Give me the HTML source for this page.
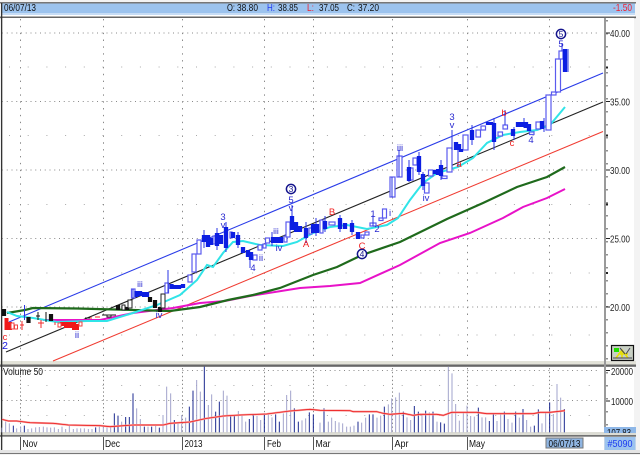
<!DOCTYPE html>
<html><head><meta charset="utf-8"><style>
html,body{margin:0;padding:0;background:#f4f4f4}
body{width:640px;height:455px;overflow:hidden}
svg{display:block}
#m{filter:blur(.3px)}
text{font-family:"Liberation Sans",sans-serif;font-size:10px;fill:#111}
.w{font-size:9.5px;fill:#2a2ad0;text-anchor:middle}
.r{font-size:9.5px;fill:#f02020;text-anchor:middle}
.a{font-size:10.5px;fill:#222}
</style></head><body>
<svg id="m" width="640" height="455" viewBox="0 0 640 455" xmlns="http://www.w3.org/2000/svg">
<rect width="640" height="455" fill="#f3f3f3"/>
<rect x="0" y="2" width="636" height="1.5" fill="#777"/>
<rect x="2" y="3.5" width="633" height="9.5" fill="#9cc3ee"/>
<rect x="2" y="13" width="633" height="2" fill="#c6dcf5"/>
<rect x="2" y="15" width="633" height="1.5" fill="#fff"/>
<rect x="0" y="16.5" width="636" height="1.7" fill="#666"/>
<rect x="2" y="18" width="602" height="343" fill="#fff"/>
<rect x="606" y="18" width="28" height="343" fill="#fff"/>
<rect x="2" y="367" width="602" height="65" fill="#fff"/>
<rect x="606" y="367" width="28" height="65" fill="#fff"/>
<rect x="0" y="361" width="636" height="3.5" fill="#e2e2d8"/>
<rect x="0" y="364.5" width="636" height="2.3" fill="#666"/>
<rect x="604" y="18" width="2" height="414" fill="#9a9a9a"/>
<rect x="0" y="432" width="636" height="3.2" fill="#dcdcd4"/>
<rect x="0" y="435.2" width="636" height="1.5" fill="#555"/>
<rect x="2" y="436.7" width="602" height="13.3" fill="#fff"/>
<rect x="604" y="436.7" width="32" height="13.3" fill="#e6e6e6"/>
<rect x="0" y="450" width="640" height="3" fill="#e4e4e4"/>
<rect x="0" y="453" width="640" height="1" fill="#777"/>
<rect x="1" y="3" width="1.3" height="447" fill="#333"/>

<!-- grid -->
<g stroke="#8a8a8a" stroke-width="1" fill="none">
<path stroke-dasharray="1 3.75" d="M2 33H600M2 101.5H600M2 170H600M2 238.5H600M2 307H600"/>
<path stroke-dasharray="1 17.7" stroke="#aaa" d="M9 67H600M9 135.5H600M9 204.5H600M9 273H600M9 335H600"/>
<path stroke-dasharray="1.4 5.45" d="M20.5 19V361M103.5 19V361M182.5 19V361M264.5 19V361M313.5 19V361M392.5 19V361M467.5 19V361M549.5 19V361"/>
<path stroke-dasharray="1 3.75" d="M2 370.5H600M2 400.5H600"/>
<path stroke-dasharray="1 17.7" stroke="#aaa" d="M9 385.5H600M9 415.5H600"/>
<path stroke-dasharray="1.4 2.5" d="M20.5 368V432M103.5 368V432M182.5 368V432M264.5 368V432M313.5 368V432M392.5 368V432M467.5 368V432M549.5 368V432"/>
</g>

<!-- channel + moving averages -->
<g fill="none">
<path d="M9 322L603 73" stroke="#2a3ce8" stroke-width="1.1"/>
<path d="M6 352L603 102" stroke="#222" stroke-width="1.1"/>
<path d="M53 361L603 131.5" stroke="#f03c32" stroke-width="1.1"/>
<path d="M43 320L67 320L100 320L133 313L173 308L200 303L225 301L250 296L300 288L330 286L360 283L400 265L440 243L470 233L503 218L523 207L547 198L565 189" stroke="#e812c8" stroke-width="2"/>
<path d="M7 313L25 310L33 308L77 308.5L133 310L170 311L200 307L228 300L253 295L280 288L313 275L337 267L362 255L400 242L447 219L483 203L517 187L547 177L565 167" stroke="#1f6a1c" stroke-width="2.2"/>
<path d="M7 312L17 316L33 318L57 322L87 321L107 321L133 313L157 305L180 295L197 280L207 265L213 267L223 253L233 242L243 241L260 245L283 246L297 242L313 233L330 227L347 225L367 229L387 225L398 218L410 200L423 183L437 173L458 167L473 158L487 143L503 135L520 132L537 130L550 125L565 107" stroke="#30e4e8" stroke-width="2"/>
</g>

<!-- early red/black candles -->
<path d="M6.5 318V330M10 322V330M62 322V326M66 322V328M70 322V328M74 322V330M77 324V330" stroke="#f01818" stroke-width="4" fill="none"/>
<g fill="#fff" stroke="#f04040" stroke-width="1"><rect x="11" y="323" width="3" height="6"/><rect x="14.500" y="325" width="3" height="4"/><rect x="58" y="323" width="3" height="4"/><rect x="79" y="322" width="3" height="4"/></g>
<path d="M20 325H24M22 321V330M38 323H44M41 320V328M87 318H92M95 317H100M55 322V325" stroke="#f02a2a" stroke-width="1" fill="none"/>
<path d="M28.500 317V323M51 314V321M118 305V310M127 307V310M150 297V302M155 300V308M160 307V312M4 309V316" stroke="#111" stroke-width="4.200" fill="none"/>
<path d="M36 316H40M38 312V320M85 318H90M102 315H116M46 322V312" stroke="#111" stroke-width="1" fill="none"/>
<path d="M24.500 305V320" stroke="#3038e0" stroke-width="1" fill="none"/>
<g fill="#fff" stroke="#222" stroke-width="1"><rect x="122" y="305" width="3" height="5"/><rect x="128" y="300" width="4" height="8"/><rect x="161" y="294" width="4" height="14"/><rect x="107" y="315" width="4" height="2"/></g>

<!-- hollow blue -->
<g fill="#fff" stroke="#5a5aee" stroke-width="1.200">
<rect x="131.500" y="289" width="3.500" height="9"/><rect x="165" y="283" width="3.500" height="10"/>
<rect x="188" y="275" width="4" height="7"/><rect x="192" y="254" width="4" height="18"/><rect x="197" y="240" width="4" height="14"/>
<rect x="213" y="236" width="2" height="8"/><rect x="230" y="232" width="2" height="6"/>
<rect x="253" y="255" width="4" height="5"/><rect x="258" y="245" width="4" height="5"/><rect x="263" y="244" width="3" height="4"/><rect x="265.500" y="238" width="4" height="5"/><rect x="284" y="236" width="3" height="6"/><rect x="286" y="222" width="4" height="15"/>
<rect x="309" y="228" width="3" height="6"/><rect x="320" y="220" width="3" height="13"/><rect x="329" y="222" width="6" height="3"/><rect x="361" y="235" width="3" height="3"/><rect x="365" y="232" width="4" height="3"/><rect x="370" y="223" width="6" height="3"/><rect x="379" y="218" width="4" height="2.500"/><rect x="382.500" y="209" width="4" height="9"/>
<rect x="390" y="177" width="5" height="20"/><rect x="397" y="156" width="5" height="21"/><rect x="410" y="168" width="3" height="12"/><rect x="413" y="158" width="4" height="7"/>
<rect x="424.500" y="183" width="4.500" height="10"/><rect x="428.500" y="170" width="4.500" height="6"/><rect x="442" y="176" width="5" height="2.500"/><rect x="447" y="148" width="5" height="24"/>
<rect x="463" y="135" width="5" height="15"/><rect x="476" y="130" width="4.500" height="7"/><rect x="481" y="126" width="4.500" height="4"/><rect x="498" y="132" width="4.500" height="4"/><rect x="503" y="125" width="4.500" height="4"/>
<rect x="529.500" y="132" width="4.500" height="2.500"/><rect x="536" y="122" width="4.500" height="7"/><rect x="546" y="95" width="5" height="35"/><rect x="551.500" y="92" width="4.500" height="3"/><rect x="555.500" y="59" width="5" height="33"/><rect x="559" y="51" width="4" height="8"/>
</g>
<!-- wicks -->
<path d="M133 289V298M168 270V293M204 230V248M217 228V250M226 222V252M238 232V248M250 255V268M272 232V246M292 205V230M306 222V243M316 218V236M325 216V232M340 215V232M352 220V235M373 215V226M392 197V177M399 150V177M409 160V182M419 152V175M423 172V190M441 160V180M452 130V150M458 146V166M472 125V145M494 118V150M505 110V125M514 127V140M524 118V128M544 118V132M568 72V49M562 43V51" stroke="#2a34e4" stroke-width="1" fill="none"/>
<!-- filled blue -->
<path d="M136.500 291V297M140 291V296M144 292V297M147 292V297M171.500 284V289M175 285V289M179 285V289M183 284V288M204 235V242M208 235V247M211 238V245M217 233V246M221 235V244M226 227V248M233 232V238M238 235V245M243 247V253M248 250V257M251 252V260M273 237V243M277 237V243M281 237V243M292 216V230M296 222V232M300 226V232M306 228V238M313 224V233M317 224V233M325 221V229M340 218V229M345 223V229M352 223V232M358 232V239M409 167V181M419 156V172M423 174V186M435 170V174M438 169V175M441 165V176M456 142V150M459 144V150M461 149V152M472 130V140M488 122V125M491 122V125M494 123V142M513 129V136M518 122V127M522 122V127M526 122V128M529 124V131M542 121V129M565 49V72" stroke="#0c1ee2" stroke-width="4.300" fill="none"/>

<!-- wave labels -->
<text class="w" x="223" y="220">3</text><text class="w" x="223" y="228">v</text>
<text class="w" x="291" y="203">5</text><text class="w" x="291" y="211">v</text>
<text class="w" x="253" y="271">4</text><text class="w" x="276" y="234" style="font-size:8.5px">iii</text><text class="w" x="279" y="251">iv</text><text class="w" x="261" y="261">ii</text>
<text class="r" x="306" y="247">A</text><text class="r" x="332" y="215">B</text><text class="r" x="362" y="249">C</text>
<text class="w" x="373" y="217">1</text><text class="w" x="377" y="232">2</text><text class="w" x="390" y="216">i</text>
<text class="w" x="400" y="151">iii</text><text class="w" x="426" y="201">iv</text><text class="w" x="452" y="120">3</text><text class="w" x="452" y="128">v</text>
<text class="r" x="459" y="167">a</text><text class="r" x="504" y="116">b</text><text class="r" x="512" y="146">c</text><text class="w" x="531" y="143">4</text>
<text class="w" x="561" y="47">5</text>
<text class="w" x="140" y="287" style="font-size:8.5px">iii</text><text class="w" x="77" y="338">ii</text><text class="w" x="159" y="318">iv</text>
<text class="r" x="5" y="340">c</text><text class="w" x="5" y="349" style="font-size:10.5px;fill:#1414e0">2</text>
<g fill="#fff" stroke="#14148c" stroke-width="1.500">
<circle cx="291" cy="189" r="4.600"/><circle cx="362" cy="254" r="4.600"/><circle cx="561" cy="34" r="4.600"/></g>
<text class="w" x="291" y="192" style="font-size:8.500px;fill:#14148c">3</text><text class="w" x="362" y="257" style="font-size:8.500px;fill:#14148c">4</text><text class="w" x="561" y="37" style="font-size:8.500px;fill:#14148c">5</text>

<!-- volume, drawn in 3x coords -->
<g transform="translate(0 355) scale(.33333)" fill="none" stroke-width="3">
<path stroke="#a2a4cc" d="M6 218V232M17 200V232M28 205V232M50 220V232M62 215V232M84 222V232M95 220V232M107 217V232M118 216V232M130 215V232M141 217V232M152 218V232M163 217V232M175 222V232M186 215V232M197 222V232M208 210V232M220 222V232M231 220V232M242 220V232M253 220V232M265 222V232M276 222V232M298 215V232M310 215V232M321 218V232M332 216V232M365 200V232M410 160V232M421 192V232M444 215V232M467 212V232M489 180V232M500 95V232M512 115V232M534 205V232M545 180V232M557 188V232M590 75V232M601 110V232M625 150V232M635 118V232M670 107V232M681 122V232M715 168V232M726 182V232M737 200V232M771 183V232M782 195V232M805 178V232M816 187V232M850 175V232M860 120V232M872 107V232M906 196V232M917 190V232"/>
<path stroke="#1c2a90" d="M40 212V232M73 212V232M287 217V232M343 175V232M354 182V232M377 186V232M388 186V232M399 115V232M433 215V232M455 215V232M478 218V232M523 195V232M568 155V232M579 107V232M613 35V232M647 170V232M658 140V232M692 180V232M703 182V232M748 192V232M760 178V232M793 175V232M827 178V232M838 200V232M883 160V232M895 200V232M928 172V232M940 178V232"/>
<g transform="translate(960 0)">
<path stroke="#a2a4cc" d="M0 203V232M25 200V232M35 188V232M46 198V232M57 202V232M68 205V232M80 215V232M91 215V232M102 212V232M125 203V232M137 188V232M171 188V232M182 182V232M205 148V232M215 130V232M227 127V232M238 113V232M261 187V232M272 195V232M306 180V232M328 172V232M351 200V232M385 35V232M396 55V232M407 147V232M418 197V232M430 172V232M441 152V232M452 183V232M463 185V232M486 187V232M497 187V232M531 198V232M542 177V232M564 192V232M576 203V232M598 188V232M620 195V232M632 215V232M666 205V232M677 172V232M700 177V232M711 87V232M722 128V232"/>
<path stroke="#1c2a90" d="M12 160V232M114 200V232M148 178V232M159 178V232M193 155V232M250 170V232M283 153V232M295 170V232M317 167V232M339 170V232M362 202V232M373 206V232M475 158V232M508 198V232M520 177V232M553 170V232M587 170V232M609 162V232M643 212V232M655 163V232M689 142V232M733 162V232"/>
</g>
<path stroke="#f7a0a0" stroke-width="6" d="M6 193L25 198L50 198L90 203L160 205L205 210L300 212L330 215L400 210L490 210L510 205L570 201L620 190L670 183L720 180L800 177L870 168L930 163L960 166L1050 167L1060 170L1130 170L1150 175L1170 178L1210 175L1240 181L1260 178L1310 178L1330 181L1355 172L1430 172L1460 176L1600 176L1620 172L1650 172L1695 167"/>
<path stroke="#ee2020" stroke-width="2.400" d="M6 193L25 198L50 198L90 203L160 205L205 210L300 212L330 215L400 210L490 210L510 205L570 201L620 190L670 183L720 180L800 177L870 168L930 163L960 166L1050 167L1060 170L1130 170L1150 175L1170 178L1210 175L1240 181L1260 178L1310 178L1330 181L1355 172L1430 172L1460 176L1600 176L1620 172L1650 172L1695 167"/>
</g>

<text x="3" y="375" textLength="40" lengthAdjust="spacingAndGlyphs">Volume 50</text>

<!-- axis -->
<g stroke="#222" stroke-width="1" fill="none">
<path d="M606 33H610M606 101.500H610M606 170H610M606 238.500H610M606 307H610M606 370.500H610M606 401H610"/>
<path stroke-dasharray="1.500 11.500" d="M607 20V360M607 372V426"/>
<path stroke-width="2" d="M606 67.500H608M606 135.500H608M606 204.500H608M606 273H608"/>
</g>
<text class="a" x="610" y="37" textLength="20" lengthAdjust="spacingAndGlyphs">40.00</text>
<text class="a" x="610" y="105.500" textLength="20" lengthAdjust="spacingAndGlyphs">35.00</text>
<text class="a" x="610" y="174" textLength="20" lengthAdjust="spacingAndGlyphs">30.00</text>
<text class="a" x="610" y="242.500" textLength="20" lengthAdjust="spacingAndGlyphs">25.00</text>
<text class="a" x="610" y="311" textLength="20" lengthAdjust="spacingAndGlyphs">20.00</text>
<text class="a" x="611" y="375" textLength="22" lengthAdjust="spacingAndGlyphs">20000</text>
<text class="a" x="611" y="405" textLength="22" lengthAdjust="spacingAndGlyphs">10000</text>
<svg x="604" y="427" width="32" height="6" viewBox="0 0 32 6"><rect width="32" height="6" fill="#8fb8e8"/><text x="3" y="9" textLength="24" lengthAdjust="spacingAndGlyphs">107.83</text></svg>

<!-- logo -->
<rect x="611.500" y="345.500" width="22" height="15" fill="#c8d0c4" stroke="#111" stroke-width="1.200"/>
<rect x="614" y="348" width="5" height="4" fill="#22e000"/>
<path d="M616 358L622 350L628 358M618 354H628M622 350V358" stroke="#e8e000" stroke-width="1.500" fill="none"/>
<path d="M620 348L625 354M630 348L626 354M613 358H632" stroke="#445" stroke-width="1" fill="none"/>

<!-- header text -->
<g style="font-size:10.500px">
<text x="4" y="11" style="font-size:10.500px" textLength="32" lengthAdjust="spacingAndGlyphs">06/07/13</text>
<text x="227" y="11" style="font-size:10.500px" textLength="8" lengthAdjust="spacingAndGlyphs">O:</text>
<text x="237" y="11" style="font-size:10.500px" textLength="21" lengthAdjust="spacingAndGlyphs">38.80</text>
<text x="267" y="11" style="font-size:10.500px;fill:#2038f0" textLength="8" lengthAdjust="spacingAndGlyphs">H:</text>
<text x="278" y="11" style="font-size:10.500px" textLength="20" lengthAdjust="spacingAndGlyphs">38.85</text>
<text x="307" y="11" style="font-size:10.500px;fill:#f02030" textLength="7" lengthAdjust="spacingAndGlyphs">L:</text>
<text x="319" y="11" style="font-size:10.500px" textLength="20" lengthAdjust="spacingAndGlyphs">37.05</text>
<text x="347" y="11" style="font-size:10.500px" textLength="8" lengthAdjust="spacingAndGlyphs">C:</text>
<text x="358" y="11" style="font-size:10.500px" textLength="21" lengthAdjust="spacingAndGlyphs">37.20</text>
<text x="613" y="11" style="font-size:10.500px;fill:#f02030" textLength="19" lengthAdjust="spacingAndGlyphs">-1.50</text>
</g>

<!-- date row -->
<path d="M20.500 437V450M103.500 437V450M182.500 437V450M264.500 437V450M313.500 437V450M392.500 437V450M467.500 437V450" stroke="#555" stroke-width="1"/>
<text x="22.500" y="447" style="font-size:10.500px" textLength="15" lengthAdjust="spacingAndGlyphs">Nov</text>
<text x="105" y="447" style="font-size:10.500px" textLength="15" lengthAdjust="spacingAndGlyphs">Dec</text>
<text x="184.500" y="447" style="font-size:10.500px" textLength="18" lengthAdjust="spacingAndGlyphs">2013</text>
<text x="267" y="447" style="font-size:10.500px" textLength="14" lengthAdjust="spacingAndGlyphs">Feb</text>
<text x="315.500" y="447" style="font-size:10.500px" textLength="15" lengthAdjust="spacingAndGlyphs">Mar</text>
<text x="394.500" y="447" style="font-size:10.500px" textLength="14" lengthAdjust="spacingAndGlyphs">Apr</text>
<text x="469" y="447" style="font-size:10.500px" textLength="16" lengthAdjust="spacingAndGlyphs">May</text>
<rect x="546" y="438" width="37" height="10" fill="#8fb5e2" stroke="#777" stroke-width="1"/>
<text x="548.500" y="447" style="font-size:10.500px" textLength="32" lengthAdjust="spacingAndGlyphs">06/07/13</text>
<rect x="604.500" y="437" width="31" height="13" fill="#9cc3ee"/>
<text x="607.500" y="447" style="font-size:10.500px;fill:#1c3cf0" textLength="25" lengthAdjust="spacingAndGlyphs">#5090</text>
</svg>
</body></html>
